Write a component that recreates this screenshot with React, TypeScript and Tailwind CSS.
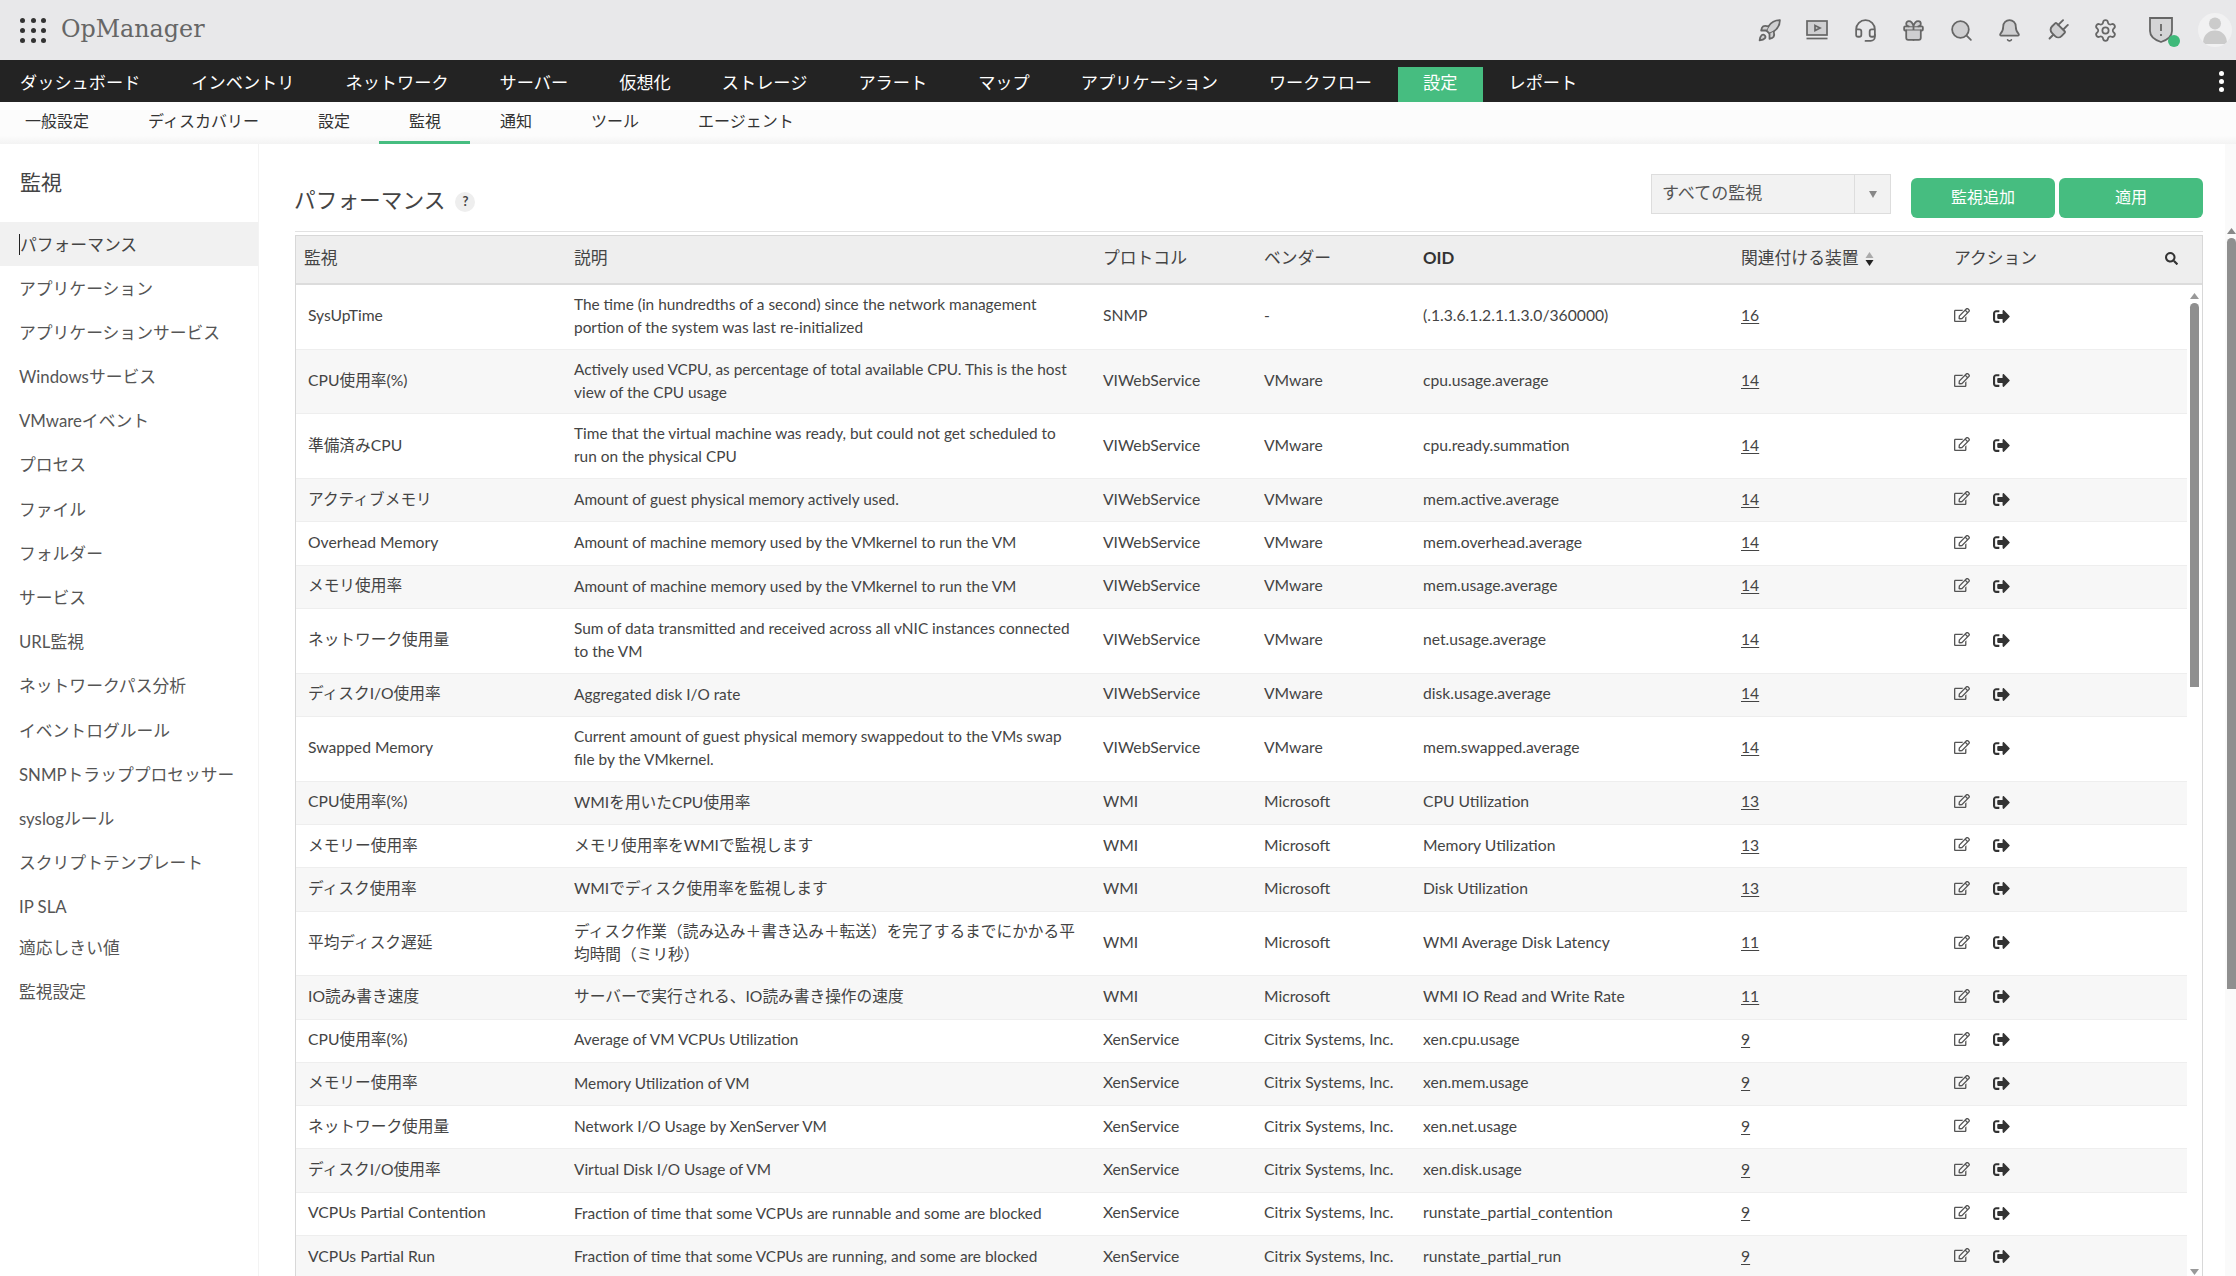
import { Bell, Gift, Headset, Plug, Rocket, Search, Settings } from 'lucide-react'
import { FaRegEdit, FaSearch, FaSignOutAlt } from 'react-icons/fa'

const mainNav = ['ダッシュボード', 'インベントリ', 'ネットワーク', 'サーバー', '仮想化', 'ストレージ', 'アラート', 'マップ', 'アプリケーション', 'ワークフロー', '設定', 'レポート']
const subNav = ['一般設定', 'ディスカバリー', '設定', '監視', '通知', 'ツール', 'エージェント']
const sideItems = ['パフォーマンス', 'アプリケーション', 'アプリケーションサービス', 'Windowsサービス', 'VMwareイベント', 'プロセス', 'ファイル', 'フォルダー', 'サービス', 'URL監視', 'ネットワークパス分析', 'イベントログルール', 'SNMPトラッププロセッサー', 'syslogルール', 'スクリプトテンプレート', 'IP SLA', '適応しきい値', '監視設定']

type Row = { name: string; desc: string; proto: string; vendor: string; oid: string; count: number; tall?: boolean }

const vm = (name: string, desc: string, oid: string, tall = false): Row => ({ name, desc, proto: 'VIWebService', vendor: 'VMware', oid, count: 14, tall })
const wmi = (name: string, desc: string, oid: string, count = 13, tall = false): Row => ({ name, desc, proto: 'WMI', vendor: 'Microsoft', oid, count, tall })
const xen = (name: string, desc: string, oid: string): Row => ({ name, desc, proto: 'XenService', vendor: 'Citrix Systems, Inc.', oid, count: 9 })

const rows: Row[] = [
  { name: 'SysUpTime', desc: 'The time (in hundredths of a second) since the network management portion of the system was last re-initialized', proto: 'SNMP', vendor: '-', oid: '(.1.3.6.1.2.1.1.3.0/360000)', count: 16, tall: true },
  vm('CPU使用率(%)', 'Actively used VCPU, as percentage of total available CPU. This is the host view of the CPU usage', 'cpu.usage.average', true),
  vm('準備済みCPU', 'Time that the virtual machine was ready, but could not get scheduled to run on the physical CPU', 'cpu.ready.summation', true),
  vm('アクティブメモリ', 'Amount of guest physical memory actively used.', 'mem.active.average'),
  vm('Overhead Memory', 'Amount of machine memory used by the VMkernel to run the VM', 'mem.overhead.average'),
  vm('メモリ使用率', 'Amount of machine memory used by the VMkernel to run the VM', 'mem.usage.average'),
  vm('ネットワーク使用量', 'Sum of data transmitted and received across all vNIC instances connected to the VM', 'net.usage.average', true),
  vm('ディスクI/O使用率', 'Aggregated disk I/O rate', 'disk.usage.average'),
  vm('Swapped Memory', 'Current amount of guest physical memory swappedout to the VMs swap file by the VMkernel.', 'mem.swapped.average', true),
  wmi('CPU使用率(%)', 'WMIを用いたCPU使用率', 'CPU Utilization'),
  wmi('メモリー使用率', 'メモリ使用率をWMIで監視します', 'Memory Utilization'),
  wmi('ディスク使用率', 'WMIでディスク使用率を監視します', 'Disk Utilization'),
  wmi('平均ディスク遅延', 'ディスク作業（読み込み＋書き込み＋転送）を完了するまでにかかる平均時間（ミリ秒）', 'WMI Average Disk Latency', 11, true),
  wmi('IO読み書き速度', 'サーバーで実行される、IO読み書き操作の速度', 'WMI IO Read and Write Rate', 11),
  xen('CPU使用率(%)', 'Average of VM VCPUs Utilization', 'xen.cpu.usage'),
  xen('メモリー使用率', 'Memory Utilization of VM', 'xen.mem.usage'),
  xen('ネットワーク使用量', 'Network I/O Usage by XenServer VM', 'xen.net.usage'),
  xen('ディスクI/O使用率', 'Virtual Disk I/O Usage of VM', 'xen.disk.usage'),
  xen('VCPUs Partial Contention', 'Fraction of time that some VCPUs are runnable and some are blocked', 'runstate_partial_contention'),
  xen('VCPUs Partial Run', 'Fraction of time that some VCPUs are running, and some are blocked', 'runstate_partial_run'),
]

function TopIcons() {
  const props = { size: 25, stroke: '#666', fill: '#cfcfd1', strokeWidth: 1.7 }
  return (
    <div className="flex items-center">
      <span className="flex w-[48px] justify-center"><Rocket {...props} /></span>
      <span className="flex w-[48px] justify-center">
        <svg width="24" height="24" viewBox="0 0 24 24" fill="none" stroke="#666" strokeWidth="1.7">
          <rect x="2" y="3" width="20" height="14" fill="#cfcfd1" />
          <path d="M10 7.5l5 2.5-5 2.5z" />
          <path d="M1.5 20.5h21" />
        </svg>
      </span>
      <span className="flex w-[48px] justify-center"><Headset size={25} stroke="#666" strokeWidth={1.7} /></span>
      <span className="flex w-[48px] justify-center"><Gift {...props} /></span>
      <span className="flex w-[48px] justify-center"><Search {...props} /></span>
      <span className="flex w-[48px] justify-center"><Bell {...props} /></span>
      <span className="flex w-[48px] justify-center"><Plug {...props} size={27} className="rotate-45" /></span>
      <span className="flex w-[48px] justify-center"><Settings size={25} stroke="#666" fill="none" strokeWidth={1.7} /></span>
      <span className="relative ml-[8px] flex w-[48px] justify-center">
        <svg width="26" height="28" viewBox="0 0 26 28" fill="#d4d4d6" stroke="#666" strokeWidth="1.8">
          <path d="M2 2h22v13c0 5-5 9-11 11C7 24 2 20 2 15z" />
          <path d="M13 8v7M13 18v2" fill="none" />
        </svg>
        <span className="absolute bottom-[-3px] right-[5px] h-[12px] w-[12px] rounded-full bg-[#3fb97a]" />
      </span>
      <span className="ml-[13px] mr-[4px] flex h-[34px] w-[34px] items-end justify-center overflow-hidden rounded-full bg-[#f1f1f2] pb-[3px]">
        <svg width="24" height="27" viewBox="0 0 24 27" fill="#cbcbcb">
          <circle cx="12" cy="6.5" r="6" />
          <path d="M0 27c0-9 5-13.500 12-13.500s12 4.500 12 13.500z" />
        </svg>
      </span>
    </div>
  )
}

function SortArrows() {
  return (
    <svg width="9" height="14" viewBox="0 0 9 14" className="ml-[7px] mt-[2px]">
      <path d="M4.5 0L8.500 6H.5z" fill="#aaa" />
      <path d="M4.5 14L.5 8h8z" fill="#222" />
    </svg>
  )
}

function TableRow({ row, even }: { row: Row; even: boolean }) {
  // japanese descriptions run a little wider than the latin ones
  const isJa = /[^\x00-\x7f]/.test(row.desc)
  return (
    <div className={`flex shrink-0 items-center border-b border-[#eeeeee] pb-[1.5px] text-[15.7px] ${row.tall ? 'h-[64.7px]' : 'h-[43.3px]'} ${even ? 'bg-[#f7f7f7]' : 'bg-white'}`}>
      <div className="w-[278px] shrink-0 pl-[12px]">{row.name}</div>
      <div className={`w-[529px] shrink-0 pr-[26px] leading-[23px] ${isJa ? 'text-[15.7px]' : 'text-[15.4px]'}`}>{row.desc}</div>
      <div className="w-[161px] shrink-0">{row.proto}</div>
      <div className="w-[159px] shrink-0">{row.vendor}</div>
      <div className="w-[318px] shrink-0">{row.oid}</div>
      <div className="w-[213px] shrink-0"><span className="underline underline-offset-2">{row.count}</span></div>
      <div className="flex flex-1 items-center text-[#444]">
        <FaRegEdit size={16} className="mt-[-2px] text-[#555]" />
        <FaSignOutAlt size={17} className="ml-[23px] text-[#333]" />
      </div>
    </div>
  )
}

export default function App() {
  return (
    <div className="flex h-screen flex-col overflow-hidden bg-white font-[Lato,'Noto_Sans_CJK_JP',sans-serif] text-[16px] text-[#444]">
      <header className="flex h-[60px] shrink-0 items-center justify-between bg-[#e8e8ea] pl-[20px]">
        <div className="flex items-center">
          <div className="grid grid-cols-3 gap-x-[5.5px] gap-y-[5px]">
            {Array.from({ length: 9 }).map((_, i) => (
              <span key={i} className="h-[5px] w-[5px] rounded-full bg-[#333]" />
            ))}
          </div>
          <span className="ml-[15px] font-['DejaVu_Serif',serif] text-[23.8px] text-[#666]">OpManager</span>
        </div>
        <TopIcons />
      </header>

      <nav className="flex h-[42px] shrink-0 items-end justify-between bg-[#232323] pl-[20px] pr-[12px] text-[17.2px] text-white">
        <div className="flex items-end">
          {mainNav.map((item, i) => (
            <span
              key={item}
              className={`flex h-[35px] items-center px-[25.5px] pb-[4px] ${i === 0 ? 'pl-0' : ''} ${item === '設定' ? 'bg-[#46bd80]' : ''}`}
            >
              {item}
            </span>
          ))}
        </div>
        <div className="flex flex-col gap-[3px] self-center">
          <span className="h-[5px] w-[5px] rounded-full bg-white" />
          <span className="h-[5px] w-[5px] rounded-full bg-white" />
          <span className="h-[5px] w-[5px] rounded-full bg-white" />
        </div>
      </nav>

      <div className="flex h-[42px] shrink-0 items-stretch bg-[linear-gradient(#fcfcfc_80%,#f3f3f3)] pl-[25px] text-[16px] text-[#333]">
        {subNav.map((item, i) => (
          <span
            key={item}
            className={`flex items-center border-b-[3px] px-[29.5px] pb-[2px] ${i === 0 ? 'pl-0' : ''} ${item === '監視' ? 'border-[#46bd80]' : 'border-transparent'}`}
          >
            {item}
          </span>
        ))}
      </div>

      <div className="flex min-h-0 flex-1">
        <aside className="w-[259px] shrink-0 border-r border-[#f3f3f3] text-[16.8px] text-[#555]">
          <h2 className="flex h-[78px] items-center pb-[3px] pl-[20px] text-[21px] text-[#444]">監視</h2>
          {sideItems.map((item, i) => (
            <div
              key={item}
              className={`flex h-[44.2px] items-center pl-[19px] ${item === 'IP SLA' ? 'mb-[-4px]' : ''} ${i === 0 ? 'bg-[#f1f1f1] text-[#444]' : ''}`}
            >
              {i === 0 && <span className="h-[21px] w-[1px] bg-[#222]" />}
              {item}
            </div>
          ))}
        </aside>

        <main className="flex min-w-0 flex-1 flex-col pl-[36px] pr-[22px]">
          <div className="flex h-[87px] shrink-0 items-start justify-between">
            <div className="ml-[-1px] mt-[40px] flex items-center">
              <h1 className="text-[21.7px] text-[#444]">パフォーマンス</h1>
              <span className="ml-[10px] mt-[3px] flex h-[20px] w-[20px] items-center justify-center rounded-full bg-[#eeeeee] text-[13px] font-bold text-[#444]">?</span>
            </div>
            <div className="flex items-start">
              <div className="mt-[30px] flex h-[40px] w-[240px] items-center border border-[#dddddd] bg-[#f2f2f2] text-[17px] text-[#555]">
                <span className="flex-1 pb-[2px] pl-[10px]">すべての監視</span>
                <span className="flex h-full w-[36px] items-center justify-center border-l border-[#dddddd]">
                  <svg width="8" height="7" viewBox="0 0 8 7"><path d="M0 0h8L4 7z" fill="#888" /></svg>
                </span>
              </div>
              <button className="ml-[20px] mt-[34px] h-[40px] w-[144px] rounded-[6px] bg-[#46bd80] pb-[2px] text-[16px] text-white">監視追加</button>
              <button className="ml-[4px] mt-[34px] h-[40px] w-[144px] rounded-[6px] bg-[#46bd80] pb-[2px] text-[16px] text-white">適用</button>
            </div>
          </div>

          <div className="flex min-h-0 flex-1 flex-col border-t border-[#e2e2e2] pt-[3px]">
            <div className="flex min-h-0 flex-1 flex-col border-x border-t border-[#d8d8d8]">
              <div className="flex h-[49px] shrink-0 items-center border-b-2 border-[#dcdcdc] bg-[#eeeeee] pb-[3px] text-[16.8px]">
                <div className="w-[278px] shrink-0 pl-[8px]">監視</div>
                <div className="w-[529px] shrink-0">説明</div>
                <div className="w-[161px] shrink-0">プロトコル</div>
                <div className="w-[159px] shrink-0">ベンダー</div>
                <div className="w-[318px] shrink-0 font-bold text-[#333]">OID</div>
                <div className="flex w-[213px] shrink-0 items-center">関連付ける装置<SortArrows /></div>
                <div className="flex flex-1 items-center justify-between pr-[24px]">
                  <span>アクション</span>
                  <FaSearch size={13} className="text-[#333]" />
                </div>
              </div>
              <div className="flex min-h-0 flex-1 overflow-hidden">
                <div className="min-w-0 flex-1">
                  {rows.map((row, i) => (
                    <TableRow key={row.oid} row={row} even={i % 2 === 1} />
                  ))}
                </div>
                <div className="flex w-[15px] shrink-0 flex-col items-center pt-[8px]">
                  <svg width="9" height="6" viewBox="0 0 9 6"><path d="M4.5 0L9 6H0z" fill="#999" /></svg>
                  <span className="mt-[4px] h-[384px] w-[9px] rounded-t-[5px] bg-[#8f8f8f]" />
                  <svg width="9" height="6" viewBox="0 0 9 6" className="mb-[1px] mt-auto"><path d="M4.5 6L9 0H0z" fill="#999" /></svg>
                </div>
              </div>
            </div>
          </div>
        </main>

        <div className="flex w-[11px] shrink-0 flex-col items-end bg-[#fafafa] pt-[84px]">
          <svg width="9" height="6" viewBox="0 0 9 6"><path d="M4.5 0L9 6H0z" fill="#888" /></svg>
          <span className="mt-[4px] h-[751px] w-[9px] rounded-t-[5px] bg-[#8f8f8f]" />
        </div>
      </div>
    </div>
  )
}
